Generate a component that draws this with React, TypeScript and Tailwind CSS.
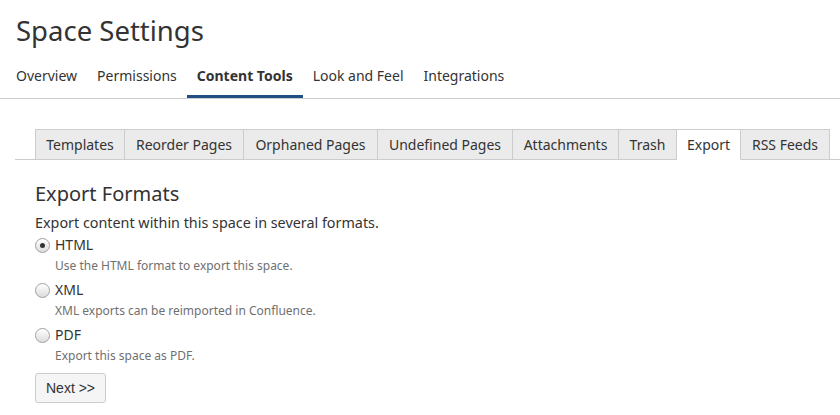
import { useState } from "react";

const mainTabs = ["Overview", "Permissions", "Content Tools", "Look and Feel", "Integrations"];
const subTabs = [
  { label: "Templates", w: "w-[90px]" },
  { label: "Reorder Pages", w: "w-[119px]" },
  { label: "Orphaned Pages", w: "w-[134px]" },
  { label: "Undefined Pages", w: "w-[135px]" },
  { label: "Attachments", w: "w-[106px]" },
  { label: "Trash", w: "w-[58px]" },
  { label: "Export", w: "w-[64px]" },
  { label: "RSS Feeds", w: "w-[89px]" },
];

const formats = [
  { id: "html", label: "HTML", desc: "Use the HTML format to export this space." },
  { id: "xml", label: "XML", desc: "XML exports can be reimported in Confluence." },
  { id: "pdf", label: "PDF", desc: "Export this space as PDF." },
];

function Radio({ checked }: { checked: boolean }) {
  return (
    <span className="flex h-[15px] w-[15px] items-center justify-center rounded-full border border-[#a0a0a0] bg-gradient-to-b from-white to-[#dcdcdc] shadow-[inset_0_1px_1px_rgba(255,255,255,0.8)]">
      {checked && <span className="h-[5px] w-[5px] rounded-full bg-[#333]" />}
    </span>
  );
}

export default function App() {
  const [format, setFormat] = useState("html");

  return (
    <div className="min-h-screen bg-white text-[#333] font-['Noto_Sans','Open_Sans',sans-serif]">
      {/* Header */}
      <h1 className="px-4 pt-[12px] text-[27.5px] leading-[38px]">Space Settings</h1>

      {/* Main nav */}
      <nav className="mt-[16px] flex border-b border-[#ccc] pl-[6px]">
        {mainTabs.map((t) => {
          const active = t === "Content Tools";
          return (
            <a
              key={t}
              href="#"
              className={
                active
                  ? "border-b-[3px] border-[#205081] px-[10px] pb-[9px] text-[14px] leading-[20px] font-bold"
                  : "border-b-[3px] border-transparent px-[10px] pb-[9px] text-[14px] leading-[20px]"
              }
            >
              {t}
            </a>
          );
        })}
      </nav>

      {/* Sub tabs */}
      <div className="ml-[15px] mt-[30px] flex border-b border-[#ccc] pl-[20px]">
        {subTabs.map((t, i) => {
          const active = t.label === "Export";
          return (
            <a
              key={t.label}
              href="#"
              className={
                (active
                  ? "-mb-px bg-white border-b border-b-white "
                  : "bg-[#ebebeb] ") +
                (i === 0 ? "border-l " : "") +
                t.w +
                " border-t border-r border-[#ccc] pt-[5px] pb-[4px] text-center text-[14px] leading-[20px] whitespace-nowrap"
              }
            >
              {t.label}
            </a>
          );
        })}
      </div>

      {/* Content */}
      <div className="px-[35px] pt-[20px]">
        <h2 className="text-[20px] leading-[28px]">Export Formats</h2>
        <p className="mt-[5px] text-[14.35px] leading-[20px]">
          Export content within this space in several formats.
        </p>

        <div className="flex flex-col">
          {formats.map((f) => (
            <label
              key={f.id}
              className="flex cursor-pointer flex-col"
              onClick={() => setFormat(f.id)}
            >
              <span className="flex h-[24px] items-center gap-[5px]">
                <Radio checked={format === f.id} />
                <span className="text-[14px] leading-[20px]">{f.label}</span>
              </span>
              <span className="h-[21px] pl-[20px] text-[12px] leading-[18px] text-[#707070]">
                {f.desc}
              </span>
            </label>
          ))}
        </div>

        <button className="mt-[5px] h-[30px] rounded-[3px] border border-[#ccc] bg-[#f5f5f5] px-[10px] text-[14px] text-[#333] font-['Liberation_Sans',Arial,sans-serif]">
          Next &gt;&gt;
        </button>
      </div>
    </div>
  );
}
